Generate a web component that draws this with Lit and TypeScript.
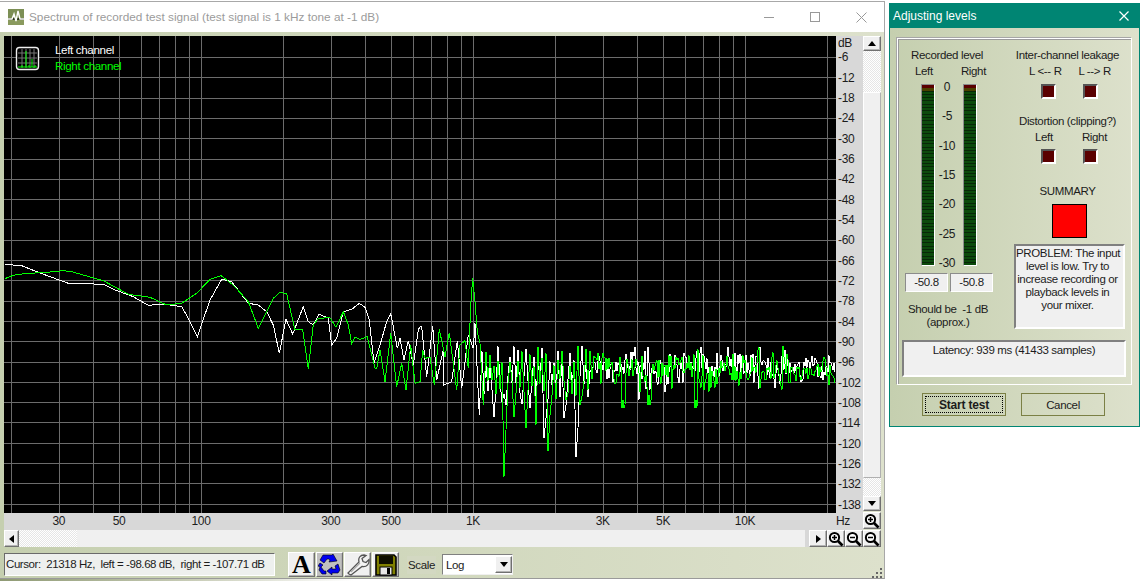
import { LitElement, html, css, svg } from "lit";
import { customElement } from "lit/decorators.js";

type P = [number, number];
const z7 = (p: P[]): P[] => p.map(([x, y]) => [x / 3, 250 + y / 3] as P);
const z8 = (p: P[]): P[] => p.map(([x, y]) => [420 + x / 3, 270 + y / 3] as P);

const whiteLow = z7([[14,43],[65,47],[110,65],[150,80],[205,100],[255,101],[310,103],[340,118],[400,140],[445,166],[490,162],[545,170],[565,205],[592,260],[630,150],[665,88],[695,95],[745,160],[775,165],[800,185],[820,225],[838,310],[858,208],[878,252],[910,170],[925,215],[940,225],[957,192],[985,205],[995,285],[1010,265],[1030,185],[1055,178],[1078,160],[1095,172],[1108,210],[1122,340],[1140,285],[1160,215],[1172,192],[1180,230],[1192,295],[1200,265],[1212,330],[1225,272],[1240,345],[1255,240]]);
const greenLow = z7([[14,86],[40,76],[80,70],[130,68],[190,62],[215,65],[260,78],[310,92],[385,133],[450,142],[500,165],[545,160],[590,130],[630,88],[663,77],[700,105],[745,155],[775,235],[820,145],[840,127],[860,132],[885,240],[908,238],[925,358],[940,225],[955,205],[990,203],[1008,232],[1030,185],[1045,225],[1055,280],[1065,262],[1080,268],[1102,260],[1125,355],[1130,355],[1140,300],[1155,395],[1172,250],[1190,410],[1205,340],[1218,420],[1232,285],[1245,400]]);
const whiteHead = z8([[0,170],[5,170],[20,320],[38,168],[50,330],[70,240],[72,345],[95,335],[112,212],[125,355],[145,195],[160,235],[165,160],[178,435]]);
const greenHead = z8([[0,335],[8,240],[15,265],[30,262],[43,345],[58,178],[75,260],[88,188],[110,360],[120,225],[135,212],[145,295],[152,105],[158,25],[165,95],[172,185],[180,220],[190,405]]);

function rng(seed: number) {
  return () => {
    seed = (seed + 0x6d2b79f5) | 0;
    let t = Math.imul(seed ^ (seed >>> 15), 1 | seed);
    t = (t + Math.imul(t ^ (t >>> 7), 61 | t)) ^ t;
    return ((t ^ (t >>> 14)) >>> 0) / 4294967296;
  };
}
function mid(seed: number, from: number, to: number, spikes: Record<number, number>): P[] {
  const r = rng(seed);
  const out: P[] = [];
  let dir = 1;
  for (let x = from; x < to; x += 2) {
    dir = -dir;
    const y = 372 + dir * (4 + r() * 24);
    out.push([x, spikes[x] ?? y]);
  }
  return out;
}
function tail(seed: number, from: number, spikes: Record<number, number>): P[] {
  const r = rng(seed);
  const out: P[] = [];
  let bias = 0;
  for (let x = from; x < 836; x += 1) {
    if (r() < 0.25) bias = (r() - 0.5) * 16;
    const big = r() < 0.14 ? 24 : 11;
    const y = 369 + bias + (r() - 0.5) * 2 * big * (x > 790 ? 0.7 : 1);
    out.push([x, spikes[x] ?? Math.max(347, Math.min(392, y))]);
  }
  return out;
}
const whiteAll: P[] = [...whiteLow, ...whiteHead,
  ...mid(5, 482, 590, { 494: 417, 502: 402, 506: 405, 522: 404, 530: 408, 544: 438, 546: 418, 564: 418, 566: 405, 576: 457, 578: 428 }),
  ...tail(11, 590, { 639: 400, 648: 347, 701: 347, 760: 347, 775: 388, 758: 376, 759: 389 })];
const greenAll: P[] = [...greenLow, ...greenHead,
  ...mid(17, 486, 596, { 504: 477, 506: 430, 514: 417, 526: 428, 536: 425, 548: 451, 550: 415, 566: 400, 580: 405, 582: 396 }),
  ...tail(29, 596, { 622: 408, 623: 400, 624: 408, 625: 405, 648: 405, 649: 395, 650: 405, 651: 400, 695: 408, 696: 400, 697: 408, 759: 347, 758: 350, 783: 346, 704: 390 })];
const pts = (p: P[]) => p.map(([x, y]) => `${x.toFixed(1)},${y.toFixed(1)}`).join(" ");

const freqX = (f: number) => 473 + 272 * Math.log10(f / 1000);
const freqs = [20,30,40,50,60,70,80,90,100,200,300,400,500,600,700,800,900,1000,2000,3000,4000,5000,6000,7000,8000,9000,10000,20000];
const hLines = Array.from({ length: 23 }, (_, k) => Math.round(57 + 20.3 * k) + 0.5);
const dbLabels = Array.from({ length: 23 }, (_, k) => `-${6 * (k + 1)}`);
const freqLabels: [string, number][] = [["30",30],["50",50],["100",100],["300",300],["500",500],["1K",1000],["3K",3000],["5K",5000],["10K",10000]];

const glass = (minus: boolean) => html`<svg width="16" height="16" viewBox="0 0 16 16">
  <circle cx="6.5" cy="6.5" r="4.6" fill="#fff" stroke="#000" stroke-width="2"/>
  <path d="M10 10l4.5 4.5" stroke="#000" stroke-width="2.6"/>
  <path d="${minus ? "M4 6.5h5" : "M4 6.5h5M6.5 4v5"}" stroke="#000" stroke-width="1.5"/>
</svg>`;

@customElement("app-root")
export class AppRoot extends LitElement {
  static styles = css`
    :host { display: block; width: 1144px; height: 581px; background: #fff; overflow: hidden; font-family: "Liberation Sans", Arial, sans-serif; font-size: 11.5px; color: #1c1c1c; letter-spacing: -0.35px; }
    .page { display: flex; align-items: flex-start; height: 581px; }
    .win { box-sizing: border-box; width: 885px; height: 578px; margin-top: 1px; border-top: 1px solid #a8a8a8; border-right: 1px solid #a8a8a8; border-bottom: 1px solid #9a9a9a; display: flex; flex-direction: column; }
    .title { height: 30px; flex: none; display: flex; align-items: center; background: #fff; padding-left: 8px; color: #9b9b9b; font-size: 11.8px; letter-spacing: 0; }
    .title .t { margin-left: 5px; flex: 1; }
    .ctrl { width: 46px; display: flex; justify-content: center; }
    .ctrls { display: flex; margin-right: 0; padding-top: 1px; }
    .client { flex: 1; position: relative; background: linear-gradient(90deg, #c5cfaf, #dde1cc); padding: 4px 2px 0 4px; display: flex; flex-direction: column; }
    .upper { display: flex; height: 494px; flex: none; }
    .plotcol { width: 859px; display: flex; flex-direction: column; }
    .plotrow { display: flex; height: 477px; flex: none; }
    .plot { width: 832px; height: 477px; position: relative; background: #000; flex: none; }
    .plot svg.chart { display: block; }
    .legend { position: absolute; left: 51px; top: 6px; line-height: 16px; color: #fff; font-size: 11.6px; }
    .legend .r { color: #0f0; }
    .dbs { width: 27px; flex: none; background: #d8d8d8; padding-left: 2px; box-sizing: border-box; font-size: 12px; }
    .dbhead { height: 11.2px; line-height: 14px; }
    .dbrow { height: 20.35px; line-height: 20.35px; white-space: nowrap; }
    .freq { height: 17px; background: #d8d8d8; position: relative; font-size: 12px; }
    .freq span { position: absolute; top: 1px; line-height: 14px; transform: translateX(-50%); }
    .freq .hz { position: absolute; left: 832px; top: 1px; transform: none; }
    .vbar { width: 18px; display: flex; flex-direction: column; }
    .btn { box-sizing: border-box; background: #f0f0f0; border: 1px solid; border-color: #fff #707070 #707070 #fff; box-shadow: inset -1px -1px #b4b4b4; display: flex; align-items: center; justify-content: center; flex: none; }
    .dither { background-image: repeating-conic-gradient(#fff 0 25%, #e6e6e6 0 50%); background-size: 2px 2px; }
    .vbar .b { height: 15px; }
    .vbar .d1 { height: 41px; }
    .vbar .th { height: 386px; background: #f0f0f0; border: 1px solid; box-sizing: border-box; border-color: #fff #b0b0b0 #b0b0b0 #fff; }
    .vbar .d2 { flex: 1; }
    .vbar .z { height: 17px; margin: 1px 0 1px; }
    .up { width: 0; height: 0; border: 4px solid transparent; border-top: 0; border-bottom: 5px solid #000; }
    .down { width: 0; height: 0; border: 4px solid transparent; border-bottom: 0; border-top: 5px solid #000; }
    .left { width: 0; height: 0; border: 4px solid transparent; border-left: 0; border-right: 5px solid #000; }
    .right { width: 0; height: 0; border: 4px solid transparent; border-right: 0; border-left: 5px solid #000; }
    .hbar { display: flex; height: 17px; flex: none; width: 877px; }
    .hbar .b { width: 15px; }
    .hbar .dh { width: 58px; }
    .hbar .th { width: 728px; background: #f0f0f0; }
    .hbar .gap { width: 4px; background: #d8d8d8; }
    .hbar .rb { width: 18px; }
    .hbar .z { width: 18px; }
    .tools { display: flex; align-items: center; padding-top: 5px; height: 25px; }
    .status { box-sizing: border-box; width: 271px; height: 23px; background: #eef0ee; border: 1px solid; border-color: #6a6a6a #fff #fff #6a6a6a; line-height: 20px; padding-left: 1px; white-space: pre; flex: none; overflow: hidden; letter-spacing: -0.42px; }
    .tbtns { display: flex; gap: 1px; margin-left: 13px; }
    .tb { width: 27px; height: 25px; }
    .tb.on { background: #c0c0c0; }
    .tb .a { font-family: "Liberation Serif", serif; font-weight: bold; font-size: 26px; color: #000; line-height: 24px; letter-spacing: 0; }
    .scale { margin-left: 8px; background: #d3d8c2; padding: 0 1px; line-height: 18px; }
    .sel { box-sizing: border-box; margin-left: 6px; width: 71px; height: 21px; background: #fff; border: 1px solid; border-color: #808080 #f0f0f0 #f0f0f0 #808080; display: flex; align-items: center; padding-left: 3px; justify-content: space-between; }
    .sel .btn { width: 17px; height: 17px; }
    .grip { position: absolute; right: 1px; bottom: 0; }
    .under { position: absolute; left: 0; top: 579px; width: 884px; height: 2px; background: linear-gradient(90deg, #8f9a74, #c9cdb8 22%, #fff 40%); }

    .dlg { box-sizing: border-box; position: relative; width: 251px; height: 424px; margin: 3px 0 0 4px; border: 1px solid #008573; background: linear-gradient(90deg, #c5cfaf, #dde1cc); display: flex; flex-direction: column; flex: none; }
    .dlgt { height: 24px; flex: none; background: #008573; color: #fff; display: flex; align-items: center; justify-content: space-between; padding: 0 10px 0 3px; font-size: 12px; letter-spacing: 0; }
    .panel { box-sizing: border-box; margin: 10px 7px 0 7px; height: 347px; border: 1px solid #fff; box-shadow: inset 1px 1px #9a9a9a, -1px -1px #a6a6a6; padding: 8px 5px 0 4px; display: flex; flex-direction: column; }
    .cols { display: flex; height: 285px; flex: none; }
    .lc { width: 88px; flex: none; margin-left: 3px; display: flex; flex-direction: column; align-items: center; }
    .rc { width: 111px; margin-left: 21px; flex: none; display: flex; flex-direction: column; align-items: center; text-align: center; }
    .line { line-height: 16px; height: 16px; white-space: nowrap; }
    .lc > .line:first-child { padding-right: 4px; }
    .rc > .line { padding-right: 4px; }
    .two { display: flex; justify-content: space-between; width: 100%; box-sizing: border-box; }
    .lc .two { padding: 0 7px 0 10px; }
    .meters { display: flex; height: 182px; margin-top: 5px; justify-content: center; align-items: flex-start; flex: none; }
    .meter { box-sizing: border-box; width: 14px; height: 182px; border: 1px solid; border-color: #8c8c8c #fff #fff #8c8c8c; background: linear-gradient(#5a0000 0 3px, #4b4000 3px 6px, transparent 6px), repeating-linear-gradient(#0b4a0b 0 2.3px, #072707 2.3px 3.3px); }
    .sc { box-sizing: border-box; width: 28px; height: 188px; margin-top: -3px; padding-right: 4px; display: flex; flex-direction: column; justify-content: space-between; align-items: center; line-height: 12px; font-size: 12px; }
    .vals { display: flex; gap: 2px; margin-top: 7px; flex: none; }
    .val { box-sizing: border-box; width: 43px; height: 19px; background: #f0f0f0; border: 1px solid; border-color: #8c8c8c #fff #fff #8c8c8c; text-align: center; line-height: 17px; }
    .should { margin-top: 11px; padding-right: 2px; text-align: center; line-height: 13px; }
    .rc .two { padding: 0 14px 0 15px; }
    .rc .two.b { padding: 0 18px 0 21px; }
    .leds { display: flex; gap: 27px; margin-top: 5px; flex: none; }
    .leds.lo { margin-top: 4px; }
    .led { box-sizing: border-box; width: 15px; height: 15px; background: #5a0000; border: 2px solid; border-color: #555 #fff #fff #555; }
    .dist { margin-top: 14px; }
    .summ { margin-top: 19px; }
    .red { box-sizing: border-box; width: 35px; height: 34px; background: #f00; border: 1px solid #000; margin-top: 5px; flex: none; }
    .prob { box-sizing: border-box; width: 111px; height: 85px; background: #f0f0f0; border: 2px solid; border-color: #808080 #fff #fff #808080; margin-top: 6px; line-height: 13px; padding: 1px 4px 1px 0; flex: none; white-space: nowrap; }
    .lat { box-sizing: border-box; width: 224px; height: 37px; margin: 8px 0 0 0; background: #f0f0f0; border: 2px solid; border-color: #808080 #fff #fff #808080; text-align: center; line-height: 13px; padding-top: 2px; flex: none; }
    .acts { display: flex; margin: 8px 0 0 32px; gap: 15px; }
    .act { box-sizing: border-box; width: 84px; height: 23px; border: 1px solid #7b8045; display: flex; align-items: center; justify-content: center; }
    .act.def { font-weight: bold; font-size: 12px; letter-spacing: -0.2px; position: relative; }
    .act.def::after { content: ""; position: absolute; inset: 2px; border: 1px dotted #000; }
  `;

  render() {
    return html`<div class="page">
      <div class="win">
        <div class="title">
          <svg width="16" height="16" viewBox="0 0 16 16">
            <rect width="16" height="16" fill="#7c8f55"/>
            <rect y="9" width="16" height="2" fill="#2c3a1a"/>
            <rect y="11" width="16" height="5" fill="#8a9a5e"/>
            <path d="M0 10h4l2-5 2 7 2-10 2 8h4" fill="none" stroke="#fff" stroke-width="1.4"/>
          </svg>
          <span class="t">Spectrum of recorded test signal (test signal is 1 kHz tone at -1 dB)</span>
          <div class="ctrls">
            <div class="ctrl"><svg width="10" height="10"><path d="M0 5.5h10" stroke="#999"/></svg></div>
            <div class="ctrl"><svg width="10" height="10"><rect x=".5" y=".5" width="9" height="9" fill="none" stroke="#999"/></svg></div>
            <div class="ctrl"><svg width="11" height="11"><path d="M.5.5l10 10M10.5.5l-10 10" stroke="#999"/></svg></div>
          </div>
        </div>
        <div class="client">
          <div class="upper">
            <div class="plotcol">
              <div class="plotrow">
                <div class="plot">
                  <svg class="chart" width="832" height="477" viewBox="4 36 832 477" shape-rendering="crispEdges">
                    ${freqs.map((f) => svg`<line x1=${Math.round(freqX(f)) + 0.5} x2=${Math.round(freqX(f)) + 0.5} y1="36" y2="513" stroke="#6c6c6c"/>`)}
                    ${hLines.map((y) => svg`<line x1="4" x2="836" y1=${y} y2=${y} stroke="#6c6c6c"/>`)}
                    <polyline points=${pts(whiteAll)} fill="none" stroke="#fff" stroke-width="1"/>
                    <polyline points=${pts(greenAll)} fill="none" stroke="#0f0" stroke-width="1"/>
                    <g shape-rendering="auto">
                      <rect x="16.5" y="47.5" width="22" height="22" rx="3" fill="#000" stroke="#eee" stroke-width="1.4"/>
                      <path d="M22 49v19M26 49v19M30 49v19M34 49v19M18 53h19M18 58h19M18 63h19" stroke="#777" stroke-width="1"/>
                      <path d="M18 67h19M26 67v-16M32 67v-8M22 67v-2M29 67v-2M35 67v-2" stroke="#0f0" stroke-width="1"/>
                    </g>
                  </svg>
                  <div class="legend"><div>Left channel</div><div class="r">Right channel</div></div>
                </div>
                <div class="dbs">
                  <div class="dbhead">dB</div>
                  ${dbLabels.map((d) => html`<div class="dbrow">${d}</div>`)}
                </div>
              </div>
              <div class="freq">
                ${freqLabels.map(([l, f]) => html`<span style="left:${freqX(f) - 4}px">${l}</span>`)}
                <span class="hz">Hz</span>
              </div>
            </div>
            <div class="vbar">
              <div class="btn b"><i class="up"></i></div>
              <div class="dither d1"></div>
              <div class="th"></div>
              <div class="dither d2"></div>
              <div class="btn b"><i class="down"></i></div>
              <div class="btn z">${glass(false)}</div>
            </div>
          </div>
          <div class="hbar">
            <div class="btn b"><i class="left"></i></div>
            <div class="dither dh"></div>
            <div class="th"></div>
            <div class="gap"></div>
            <div class="btn rb"><i class="right"></i></div>
            <div class="btn z">${glass(false)}</div>
            <div class="btn z">${glass(true)}</div>
            <div class="btn z">${glass(true)}</div>
          </div>
          <div class="tools">
            <div class="status">Cursor:  21318 Hz,  left = -98.68 dB,  right = -107.71 dB</div>
            <div class="tbtns">
              <div class="btn tb"><span class="a">A</span></div>
              <div class="btn tb on">
                <svg width="23" height="23" viewBox="0 0 23 23">
                  <g fill="#0000f0" stroke="#000" stroke-width=".6">
                    <path d="M5 2h9l1-1 4 7-8 1 1-2-1-1H9L6 10 2 7z"/>
                    <path d="M20 11l2 6-2 3h-6v2l-5-4 5-4v2h4l-1-3z"/>
                    <path d="M2 10l3 2-2 2 3 4h2v3H4l-3-4 1-3-2-1z"/>
                  </g>
                </svg>
              </div>
              <div class="btn tb">
                <svg width="24" height="24" viewBox="0 0 24 24">
                  <path d="M3 21l-1-1 11-11c-1-4 1-7 5-7l2 .5-4 3 1 3 3 1 3-3c.6 4-2 8-7 7L5 22z" fill="#f4f4f4" stroke="#555" stroke-width="1.3"/>
                  <path d="M5 19l9-9" stroke="#aaa" stroke-width="1.2"/>
                </svg>
              </div>
              <div class="btn tb">
                <svg width="22" height="22" viewBox="0 0 22 22">
                  <path d="M1 1h18l2 2v18H1z" fill="#808000" stroke="#000" stroke-width="1.6"/>
                  <rect x="4" y="2" width="14" height="8" fill="#101000"/>
                  <rect x="5" y="13" width="12" height="8" fill="#e8e8e8" stroke="#000"/>
                  <rect x="12" y="14" width="3" height="6" fill="#000"/>
                </svg>
              </div>
            </div>
            <div class="scale">Scale</div>
            <div class="sel"><span>Log</span><div class="btn"><i class="down"></i></div></div>
          </div>
          <svg class="grip" width="11" height="11" viewBox="0 0 11 11" shape-rendering="crispEdges">
            <path d="M8 1h2v2H8zM4 5h2v2H4zM8 5h2v2H8zM0 9h2v2H0zM4 9h2v2H4zM8 9h2v2H8z" fill="#666"/>
          </svg>
        </div>
      </div>
      <div class="under"></div>
      <div class="dlg">
        <div class="dlgt"><span>Adjusting levels</span>
          <svg width="10" height="10"><path d="M.5.5l9 9M9.5.5l-9 9" stroke="#fff" stroke-width="1.2"/></svg>
        </div>
        <div class="panel">
          <div class="cols">
            <div class="lc">
              <div class="line">Recorded level</div>
              <div class="line two"><span>Left</span><span>Right</span></div>
              <div class="meters">
                <div class="meter"></div>
                <div class="sc"><span>0</span><span>-5</span><span>-10</span><span>-15</span><span>-20</span><span>-25</span><span>-30</span></div>
                <div class="meter"></div>
              </div>
              <div class="vals"><div class="val">-50.8</div><div class="val">-50.8</div></div>
              <div class="should">Should be&nbsp; -1 dB<br>(approx.)</div>
            </div>
            <div class="rc">
              <div class="line">Inter-channel leakage</div>
              <div class="line two"><span>L &lt;-- R</span><span>L --&gt; R</span></div>
              <div class="leds"><div class="led"></div><div class="led"></div></div>
              <div class="line dist">Distortion (clipping?)</div>
              <div class="line two b"><span>Left</span><span>Right</span></div>
              <div class="leds lo"><div class="led"></div><div class="led"></div></div>
              <div class="line summ">SUMMARY</div>
              <div class="red"></div>
              <div class="prob">PROBLEM: The input<br>level is low. Try to<br>increase recording or<br>playback levels in<br>your mixer.</div>
            </div>
          </div>
          <div class="lat">Latency: 939 ms (41433 samples)</div>
        </div>
        <div class="acts">
          <div class="act def">Start test</div>
          <div class="act">Cancel</div>
        </div>
      </div>
    </div>`;
  }
}
